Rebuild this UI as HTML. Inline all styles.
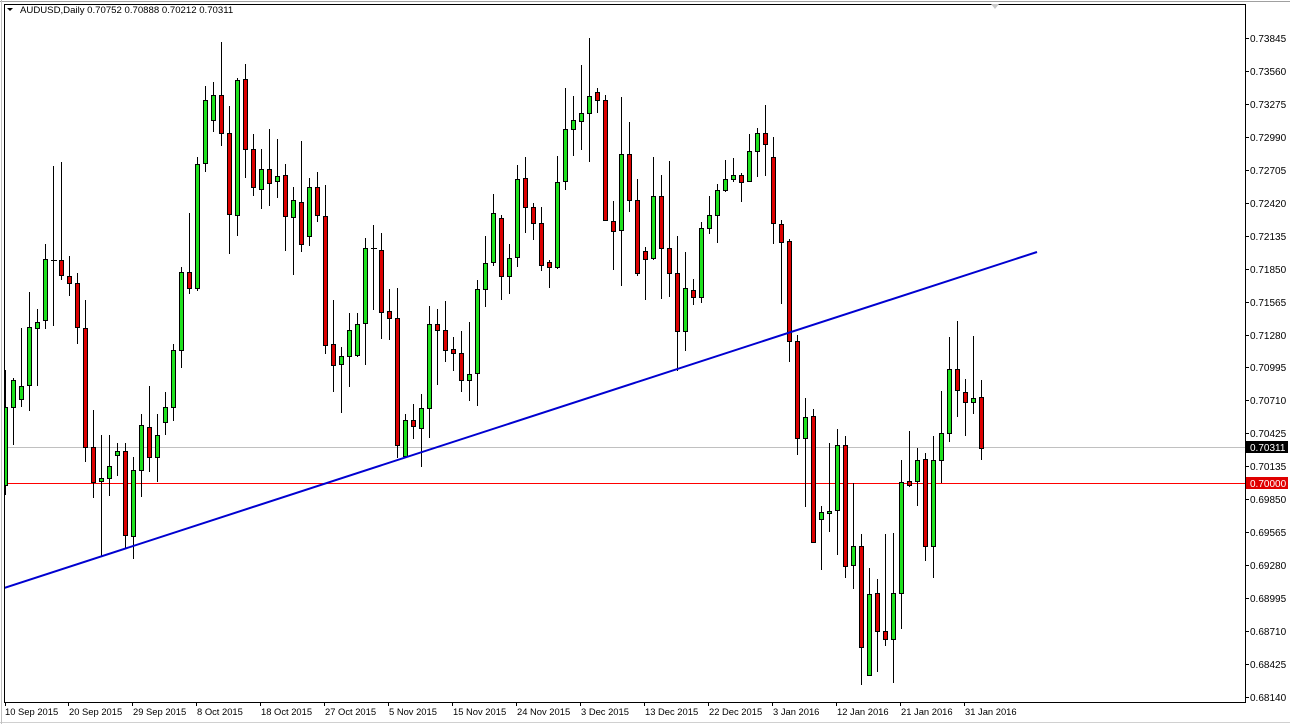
<!DOCTYPE html>
<html><head><meta charset="utf-8"><style>
html,body{margin:0;padding:0;background:#fff;width:1290px;height:724px;overflow:hidden}
svg{display:block}
text{font-family:"Liberation Sans",sans-serif;font-size:10px;fill:#000}
.d text{font-size:9.4px}
</style></head><body>
<svg width="1290" height="724" viewBox="0 0 1290 724" xmlns="http://www.w3.org/2000/svg">
<rect x="0" y="0" width="1290" height="724" fill="#fff"/>
<line x1="0" y1="1.5" x2="1290" y2="1.5" stroke="#a0a0a0"/>
<line x1="0" y1="722.5" x2="1290" y2="722.5" stroke="#d0d0d0"/>
<line x1="1.5" y1="0" x2="1.5" y2="724" stroke="#c0c0c0"/>
<defs><clipPath id="c"><rect x="4" y="4" width="1241" height="698"/></clipPath></defs>
<g clip-path="url(#c)">
<rect x="4" y="447" width="1241" height="1" fill="#c0c0c0"/>
<rect x="4" y="483" width="1241" height="1" fill="#ff0000"/>
<path stroke="#000" stroke-width="1" fill="none" d="M5.5 370V495M13.5 378V445M21.5 328V407M29.5 292V411M37.5 309V386M45.5 244V329M53.5 166V326M61.5 162V280M69.5 256V296M77.5 273V344M85.5 300V462M93.5 410V498M101.5 435V557M109.5 435V496M117.5 443V476M125.5 443V549M133.5 457V559M141.5 414V497M149.5 386V472M157.5 414V482M165.5 392V435M173.5 344V421M181.5 267V368M189.5 213V294M197.5 157V291M205.5 86V172M213.5 82V132M221.5 42V146M229.5 106V254M237.5 78V236M245.5 64V178M253.5 134V196M261.5 149V209M269.5 129V206M277.5 139V198M285.5 164V251M293.5 187V275M301.5 141V252M309.5 178V246M317.5 172V222M325.5 185V354M333.5 300V392M341.5 347V413M349.5 313V387M357.5 313V357M365.5 238V365M373.5 225V310M381.5 233V339M389.5 289V340M397.5 288V458M405.5 414V458M413.5 404V439M421.5 394V467M429.5 306V438M437.5 309V385M445.5 301V362M453.5 337V371M461.5 331V392M469.5 322V401M477.5 280V406M485.5 236V307M493.5 194V266M501.5 215V300M509.5 244V294M517.5 165V267M525.5 157V233M533.5 203V240M541.5 207V271M549.5 260V288M557.5 156V269M565.5 88V190M573.5 96V156M581.5 65V150M589.5 38V162M597.5 88V113M605.5 95V221M613.5 201V270M621.5 97V286M629.5 122V212M637.5 179V276M645.5 247V300M653.5 157V260M661.5 175V299M669.5 161V297M677.5 236V371M685.5 252V351M693.5 279V305M701.5 222V303M709.5 196V234M717.5 184V243M725.5 160V192M733.5 158V182M741.5 173V202M749.5 134V182M757.5 128V177M765.5 105V176M773.5 137V244M781.5 220V304M789.5 239V362M797.5 335V455M805.5 398V507M813.5 409V543M821.5 506V570M829.5 443V532M837.5 429V555M845.5 436V578M853.5 483V589M861.5 534V685M869.5 568V676M877.5 579V672M885.5 534V646M893.5 533V683M901.5 460V629M909.5 431V487M917.5 448V506M925.5 453V561M933.5 436V578M941.5 391V483M949.5 337V442M957.5 321V417M965.5 379V436M973.5 336V414M981.5 380V460M51 260.5H57M371 248.5H377"/>
<g fill="#1ee11e" stroke="#000" stroke-width="1">
<rect x="3.5" y="407.5" width="4" height="78"/><rect x="11.5" y="380.5" width="4" height="27"/><rect x="19.5" y="386.5" width="4" height="13"/><rect x="27.5" y="327.5" width="4" height="58"/><rect x="35.5" y="322.5" width="4" height="6"/><rect x="43.5" y="259.5" width="4" height="61"/><rect x="99.5" y="478.5" width="4" height="3"/><rect x="107.5" y="466.5" width="4" height="12"/><rect x="115.5" y="451.5" width="4" height="4"/><rect x="131.5" y="470.5" width="4" height="66"/><rect x="139.5" y="425.5" width="4" height="45"/><rect x="155.5" y="435.5" width="4" height="22"/><rect x="163.5" y="407.5" width="4" height="15"/><rect x="171.5" y="350.5" width="4" height="57"/><rect x="179.5" y="272.5" width="4" height="78"/><rect x="195.5" y="164.5" width="4" height="124"/><rect x="203.5" y="100.5" width="4" height="63"/><rect x="211.5" y="95.5" width="4" height="25"/><rect x="235.5" y="80.5" width="4" height="135"/><rect x="259.5" y="169.5" width="4" height="20"/><rect x="275.5" y="176.5" width="4" height="5"/><rect x="291.5" y="200.5" width="4" height="17"/><rect x="307.5" y="187.5" width="4" height="49"/><rect x="339.5" y="356.5" width="4" height="8"/><rect x="347.5" y="330.5" width="4" height="26"/><rect x="355.5" y="324.5" width="4" height="31"/><rect x="363.5" y="248.5" width="4" height="75"/><rect x="403.5" y="420.5" width="4" height="36"/><rect x="419.5" y="408.5" width="4" height="20"/><rect x="427.5" y="324.5" width="4" height="84"/><rect x="467.5" y="374.5" width="4" height="6"/><rect x="475.5" y="289.5" width="4" height="84"/><rect x="483.5" y="263.5" width="4" height="26"/><rect x="491.5" y="213.5" width="4" height="49"/><rect x="507.5" y="258.5" width="4" height="18"/><rect x="515.5" y="179.5" width="4" height="78"/><rect x="555.5" y="182.5" width="4" height="85"/><rect x="563.5" y="129.5" width="4" height="52"/><rect x="571.5" y="120.5" width="4" height="9"/><rect x="579.5" y="113.5" width="4" height="8"/><rect x="587.5" y="96.5" width="4" height="17"/><rect x="619.5" y="154.5" width="4" height="76"/><rect x="651.5" y="196.5" width="4" height="62"/><rect x="683.5" y="288.5" width="4" height="43"/><rect x="699.5" y="228.5" width="4" height="69"/><rect x="707.5" y="215.5" width="4" height="13"/><rect x="715.5" y="190.5" width="4" height="25"/><rect x="723.5" y="179.5" width="4" height="11"/><rect x="731.5" y="175.5" width="4" height="4"/><rect x="747.5" y="151.5" width="4" height="30"/><rect x="755.5" y="133.5" width="4" height="18"/><rect x="803.5" y="417.5" width="4" height="21"/><rect x="819.5" y="512.5" width="4" height="7"/><rect x="827.5" y="511.5" width="4" height="2"/><rect x="835.5" y="445.5" width="4" height="65"/><rect x="851.5" y="546.5" width="4" height="19"/><rect x="867.5" y="594.5" width="4" height="81"/><rect x="891.5" y="593.5" width="4" height="46"/><rect x="899.5" y="482.5" width="4" height="111"/><rect x="915.5" y="460.5" width="4" height="21"/><rect x="931.5" y="460.5" width="4" height="86"/><rect x="939.5" y="433.5" width="4" height="27"/><rect x="947.5" y="369.5" width="4" height="64"/><rect x="971.5" y="398.5" width="4" height="4"/>
</g>
<g fill="#dc0000" stroke="#000" stroke-width="1">
<rect x="59.5" y="260.5" width="4" height="15"/><rect x="67.5" y="276.5" width="4" height="7"/><rect x="75.5" y="283.5" width="4" height="44"/><rect x="83.5" y="328.5" width="4" height="119"/><rect x="91.5" y="447.5" width="4" height="35"/><rect x="123.5" y="451.5" width="4" height="84"/><rect x="147.5" y="427.5" width="4" height="30"/><rect x="187.5" y="272.5" width="4" height="16"/><rect x="219.5" y="95.5" width="4" height="38"/><rect x="227.5" y="133.5" width="4" height="81"/><rect x="243.5" y="79.5" width="4" height="70"/><rect x="251.5" y="149.5" width="4" height="38"/><rect x="267.5" y="169.5" width="4" height="14"/><rect x="283.5" y="175.5" width="4" height="41"/><rect x="299.5" y="202.5" width="4" height="42"/><rect x="315.5" y="187.5" width="4" height="28"/><rect x="323.5" y="216.5" width="4" height="129"/><rect x="331.5" y="344.5" width="4" height="21"/><rect x="379.5" y="250.5" width="4" height="62"/><rect x="387.5" y="311.5" width="4" height="7"/><rect x="395.5" y="318.5" width="4" height="127"/><rect x="411.5" y="420.5" width="4" height="6"/><rect x="435.5" y="324.5" width="4" height="6"/><rect x="443.5" y="330.5" width="4" height="20"/><rect x="451.5" y="349.5" width="4" height="4"/><rect x="459.5" y="353.5" width="4" height="27"/><rect x="499.5" y="218.5" width="4" height="58"/><rect x="523.5" y="178.5" width="4" height="29"/><rect x="531.5" y="207.5" width="4" height="16"/><rect x="539.5" y="223.5" width="4" height="42"/><rect x="547.5" y="262.5" width="4" height="5"/><rect x="595.5" y="92.5" width="4" height="8"/><rect x="603.5" y="100.5" width="4" height="120"/><rect x="611.5" y="221.5" width="4" height="10"/><rect x="627.5" y="154.5" width="4" height="46"/><rect x="635.5" y="200.5" width="4" height="73"/><rect x="643.5" y="251.5" width="4" height="8"/><rect x="659.5" y="196.5" width="4" height="52"/><rect x="667.5" y="248.5" width="4" height="25"/><rect x="675.5" y="273.5" width="4" height="58"/><rect x="691.5" y="290.5" width="4" height="7"/><rect x="739.5" y="175.5" width="4" height="7"/><rect x="763.5" y="133.5" width="4" height="11"/><rect x="771.5" y="157.5" width="4" height="66"/><rect x="779.5" y="224.5" width="4" height="18"/><rect x="787.5" y="241.5" width="4" height="100"/><rect x="795.5" y="341.5" width="4" height="97"/><rect x="811.5" y="416.5" width="4" height="126"/><rect x="843.5" y="445.5" width="4" height="121"/><rect x="859.5" y="546.5" width="4" height="101"/><rect x="875.5" y="593.5" width="4" height="38"/><rect x="883.5" y="631.5" width="4" height="8"/><rect x="907.5" y="481.5" width="4" height="4"/><rect x="923.5" y="459.5" width="4" height="87"/><rect x="955.5" y="369.5" width="4" height="21"/><rect x="963.5" y="392.5" width="4" height="10"/><rect x="979.5" y="397.5" width="4" height="51"/>
</g>
<line x1="4" y1="588" x2="1037" y2="252" stroke="#0000d0" stroke-width="2"/>
</g>
<rect x="4.5" y="4.5" width="1241" height="698" fill="none" stroke="#000"/>
<path d="M991 4L999 4L995 9Z" fill="#c8c8c8"/>
<path d="M7 8L13 8L10 11Z" fill="#000"/>
<text x="20" y="13" style="font-size:9.6px">AUDUSD,Daily  0.70752 0.70888 0.70212 0.70311</text>
<g stroke="#000"><path d="M1245 38.5h4M1245 71.5h4M1245 104.5h4M1245 137.5h4M1245 170.5h4M1245 203.5h4M1245 236.5h4M1245 269.5h4M1245 302.5h4M1245 335.5h4M1245 367.5h4M1245 400.5h4M1245 433.5h4M1245 466.5h4M1245 499.5h4M1245 532.5h4M1245 565.5h4M1245 598.5h4M1245 631.5h4M1245 664.5h4M1245 697.5h4"/></g>
<g>
<text x="1250" y="42">0.73845</text><text x="1250" y="75">0.73560</text><text x="1250" y="108">0.73275</text><text x="1250" y="141">0.72990</text><text x="1250" y="174">0.72705</text><text x="1250" y="207">0.72420</text><text x="1250" y="240">0.72135</text><text x="1250" y="273">0.71850</text><text x="1250" y="306">0.71565</text><text x="1250" y="339">0.71280</text><text x="1250" y="371">0.70995</text><text x="1250" y="404">0.70710</text><text x="1250" y="437">0.70425</text><text x="1250" y="470">0.70135</text><text x="1250" y="503">0.69850</text><text x="1250" y="536">0.69565</text><text x="1250" y="569">0.69280</text><text x="1250" y="602">0.68995</text><text x="1250" y="635">0.68710</text><text x="1250" y="668">0.68425</text><text x="1250" y="701">0.68140</text>
</g>
<rect x="1246" y="441" width="42" height="12" fill="#000"/>
<text x="1250" y="451" style="fill:#fff">0.70311</text>
<rect x="1246" y="477" width="42" height="12" fill="#e00000"/>
<text x="1250" y="487" style="fill:#fff">0.70000</text>
<g stroke="#000"><path d="M5.5 702v4M68.5 702v4M132.5 702v4M196.5 702v4M260.5 702v4M324.5 702v4M388.5 702v4M452.5 702v4M516.5 702v4M580.5 702v4M644.5 702v4M708.5 702v4M772.5 702v4M836.5 702v4M900.5 702v4M964.5 702v4"/></g>
<g class="d">
<text x="5" y="715">10 Sep 2015</text><text x="69" y="715">20 Sep 2015</text><text x="133" y="715">29 Sep 2015</text><text x="197" y="715">8 Oct 2015</text><text x="261" y="715">18 Oct 2015</text><text x="325" y="715">27 Oct 2015</text><text x="389" y="715">5 Nov 2015</text><text x="453" y="715">15 Nov 2015</text><text x="517" y="715">24 Nov 2015</text><text x="581" y="715">3 Dec 2015</text><text x="645" y="715">13 Dec 2015</text><text x="709" y="715">22 Dec 2015</text><text x="773" y="715">3 Jan 2016</text><text x="837" y="715">12 Jan 2016</text><text x="901" y="715">21 Jan 2016</text><text x="965" y="715">31 Jan 2016</text>
</g>
</svg>
</body></html>
